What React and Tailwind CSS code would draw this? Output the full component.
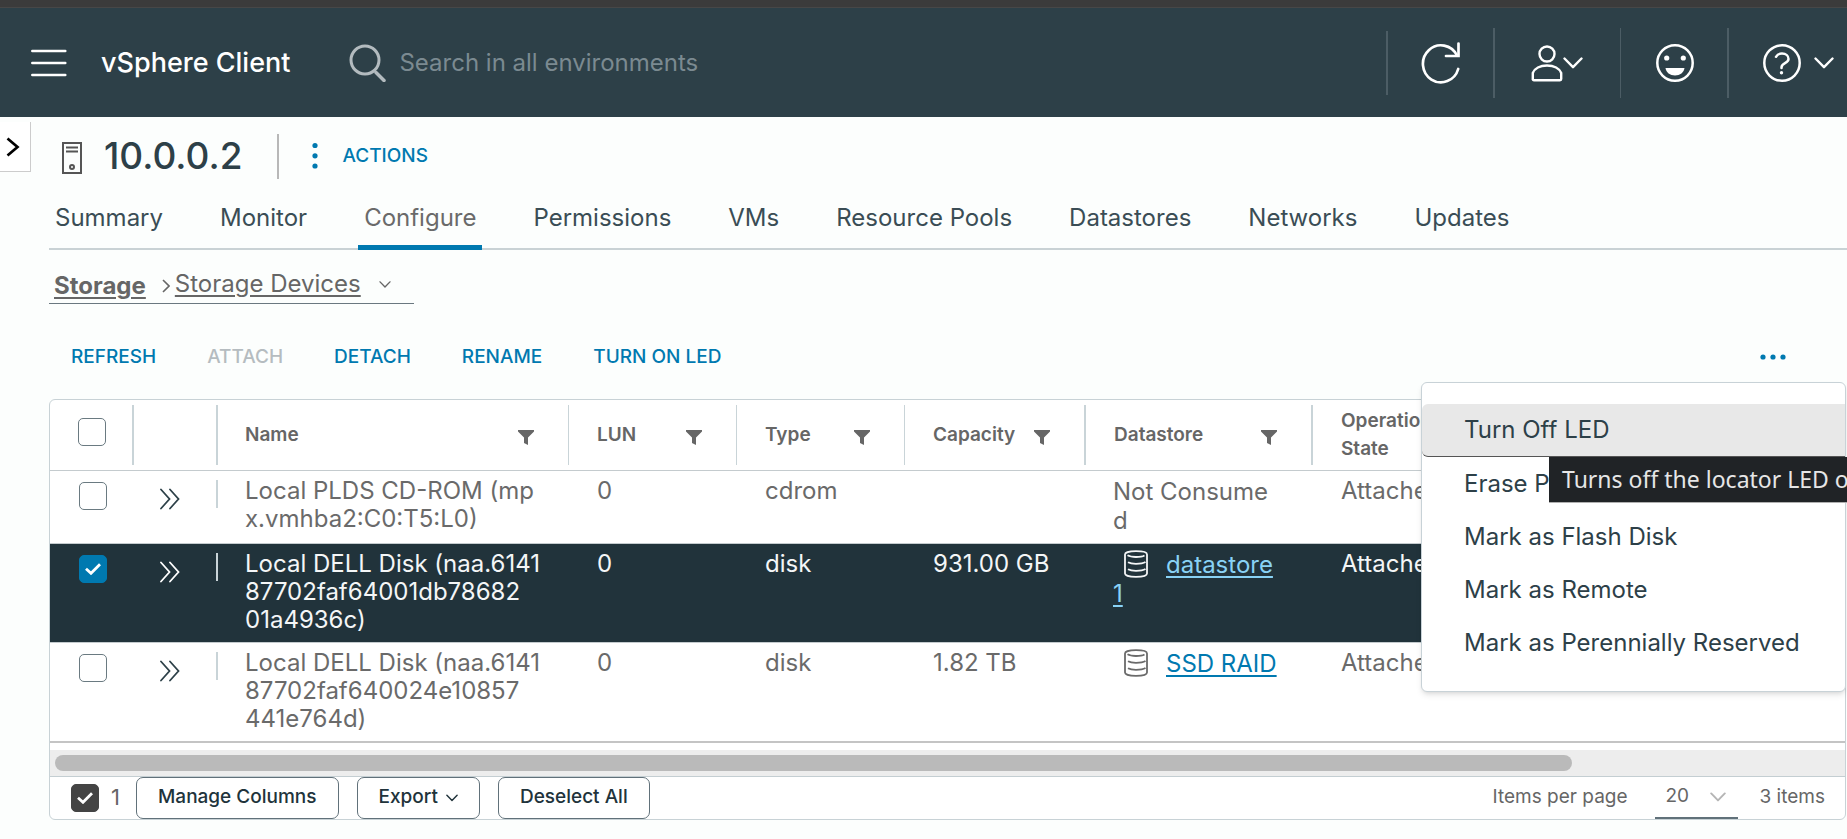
import React from "react";

const tabs = ["Summary", "Monitor", "Configure", "Permissions", "VMs", "Resource Pools", "Datastores", "Networks", "Updates"];

const columns = [
  { name: "Name", divider: "border-r pl-[27px]" },
  { name: "LUN", divider: "border-r pl-7" },
  { name: "Type", divider: "border-r pl-7" },
  { name: "Capacity", divider: "border-r-2 pl-7" },
  { name: "Datastore", divider: "border-r-2 pl-7" },
];

const rows = [
  { name: "Local PLDS CD-ROM (mp\nx.vmhba2:C0:T5:L0)", lun: "0", type: "cdrom", capacity: "", datastore: "Not Consumed", link: false, state: "Attached", selected: false },
  { name: "Local DELL Disk (naa.6141\n87702faf64001db78682\n01a4936c)", lun: "0", type: "disk", capacity: "931.00 GB", datastore: "datastore1", link: true, state: "Attached", selected: true },
  { name: "Local DELL Disk (naa.6141\n87702faf640024e10857\n441e764d)", lun: "0", type: "disk", capacity: "1.82 TB", datastore: "SSD RAID", link: true, state: "Attached", selected: false },
];

const menuItems = ["Turn Off LED", "Erase Partitions", "Mark as Flash Disk", "Mark as Remote", "Mark as Perennially Reserved"];

function Chevron({ className }) {
  return (
    <svg viewBox="0 0 20 12" fill="none" stroke="currentColor" strokeWidth="2.4" strokeLinecap="round" strokeLinejoin="round" className={className} aria-hidden="true">
      <path d="M1.500 1.500 10 10.200l8.500-8.700" />
    </svg>
  );
}

function Funnel() {
  return (
    <svg viewBox="0 0 16 16" className="h-4 w-4 fill-[#666]" aria-hidden="true">
      <path d="M0 1h16v1.500L10 8.500V16l-4-2V8.500L0 2.500z" />
    </svg>
  );
}

function Database() {
  return (
    <svg viewBox="0 0 24 28" fill="none" stroke="currentColor" strokeWidth="1.800" className="inline-block h-7 w-6 align-[-5px]" aria-hidden="true">
      <path d="M1 4.500C1 2.500 5 1.200 12 1.200s11 1.300 11 3.300v19c0 2-4 3.300-11 3.300S1 25.500 1 23.500z" />
      <path d="M3.500 5.300c2 1.200 5 1.700 8.500 1.700s6.500-.4 8.500-1.600M4 12.200c2 1.200 5 1.600 8 1.600s7-.3 9.500-1.800M4 19.200c2 1.200 5 1.600 8 1.600s7-.3 9.500-1.800" />
    </svg>
  );
}

function Checkbox({ label, checked = false, dark = false }) {
  return (
    <span className="inline-grid h-7 w-7 place-items-center align-top">
      <input
        type="checkbox"
        aria-label={label}
        defaultChecked={checked}
        className={
          "peer col-start-1 row-start-1 h-7 w-7 appearance-none rounded-[5px] border border-[#6a7a81] bg-white " +
          (dark ? "checked:border-[#444] checked:bg-[#444]" : "checked:border-[#0079b0] checked:bg-[#0079b0]")
        }
      />
      <svg viewBox="0 0 16 12" fill="none" stroke="#fff" strokeWidth="2.800" className="pointer-events-none col-start-1 row-start-1 hidden h-3 w-4 peer-checked:block" aria-hidden="true">
        <path d="M1 5.800 6 10.300 15 1.200" />
      </svg>
    </span>
  );
}

function Header() {
  return (
    <header>
      <div className="h-2 border-b border-[#474747] bg-[#3b3b3b]" />
      <div className="flex h-[109px] items-center bg-[#2d4048] text-white">
        <button aria-label="Menu" className="ml-[31px]">
          <svg viewBox="0 0 36 28" stroke="#fff" strokeWidth="2.500" strokeLinecap="round" className="h-7 w-9" aria-hidden="true">
            <path d="M1.300 2h33M1.300 14h33M1.300 26h33" />
          </svg>
        </button>
        <h2 className="ml-[34px] text-[27px] font-medium leading-8 whitespace-nowrap">vSphere Client</h2>
        <label className="ml-[59px] flex flex-1 items-center gap-3">
          <svg viewBox="0 0 38 38" fill="none" stroke="#b3bbbf" className="h-[38px] w-[38px] shrink-0" aria-hidden="true">
            <circle cx="16" cy="16" r="14" strokeWidth="3" />
            <path d="M27 28.500l8 8" strokeWidth="3.500" strokeLinecap="round" />
          </svg>
          <input type="search" aria-label="Search" placeholder="Search in all environments" className="w-full min-w-0 bg-transparent text-2xl outline-none placeholder:text-[#7b8a91]" />
        </label>
        <button aria-label="Refresh" className="flex h-16 w-[107px] items-center border-l-2 border-[#4c5d65] pl-[33px]">
          <svg viewBox="0 0 40 42" fill="none" stroke="#fff" strokeWidth="2.700" strokeLinecap="round" className="h-[42px] w-10" aria-hidden="true">
            <path d="M37.200 27A18 18.500 0 1 1 36 13.500" />
            <path d="M25 14h12.500V1.500" />
          </svg>
        </button>
        <button aria-label="User" className="flex h-[70px] w-[127px] items-center border-l-2 border-[#4c5d65] pl-9">
          <svg viewBox="2 0 32 38" fill="none" stroke="#fff" strokeWidth="2.400" className="h-[38px] w-8" aria-hidden="true">
            <circle cx="18" cy="10" r="7.500" />
            <path d="M3.800 36V29C5.500 24.500 11 21.500 18 21.500S30.500 24.500 32.200 29v6c0 .8-.4 1.200-1.200 1.200H5c-.8 0-1.200-.4-1.200-1.200z" />
          </svg>
          <Chevron className="h-3 w-5" />
        </button>
        <button aria-label="Feedback" className="flex h-[70px] w-[107px] items-center border-l border-[#4c5d65] pl-[35px]">
          <svg viewBox="0 0 38 38" fill="none" stroke="#fff" className="h-[38px] w-[38px]" aria-hidden="true">
            <circle cx="19" cy="19" r="17.700" strokeWidth="2.500" />
            <path d="M9.500 24h19c-.5 4.500-4.500 7.500-9.500 7.500S10 28.500 9.500 24z" fill="#fff" stroke="none" />
            <circle cx="10.700" cy="14" r="2.600" fill="#fff" stroke="none" />
            <circle cx="27.300" cy="14" r="2.600" fill="#fff" stroke="none" />
          </svg>
        </button>
        <button aria-label="Help" className="flex h-[70px] w-[120px] items-center gap-[13px] border-l-2 border-[#4c5d65] pl-[34px]">
          <svg viewBox="0 0 38 38" fill="none" stroke="#fff" className="h-[38px] w-[38px]" aria-hidden="true">
            <circle cx="19" cy="19" r="17.700" strokeWidth="2.500" />
            <path d="M13 12.800c1.200-2 3.300-3.200 6-3.200 4 0 6.500 2.200 6.500 5.400 0 4.500-7 3.800-7 8.400v.6" strokeWidth="2.500" strokeLinecap="round" />
            <circle cx="18.500" cy="28.700" r="1.700" fill="#fff" stroke="none" />
          </svg>
          <Chevron className="h-3 w-5" />
        </button>
      </div>
    </header>
  );
}

function ActionMenu() {
  return (
    <div role="menu" className="absolute top-[78px] right-px z-10 w-[425px] rounded-[6px] border border-[#c8d2d7] bg-white pt-[21px] pb-[22px] font-normal shadow-md">
      {menuItems.map((item, i) => (
        <div key={item} className="relative">
          <button
            role="menuitem"
            className={
              "block h-[53px] w-full pl-[42px] text-left text-2xl whitespace-nowrap text-[#2d4048] " +
              (i === 0 ? "rounded-l-[6px] border-b border-[#555] bg-[#e8e8e8]" : "")
            }
          >
            {item}
          </button>
          {i === 0 && (
            <div role="tooltip" className="absolute top-[53px] left-[127px] z-20 h-[46px] border-b border-[#b0b0b0] bg-[#202326] px-[13px] font-['Noto_Sans',sans-serif] text-[23px] leading-[44px] whitespace-nowrap text-[#e6e6e6]">
              Turns off the locator LED of
            </div>
          )}
        </div>
      ))}
    </div>
  );
}

function DeviceTable() {
  return (
    <table className="w-full table-fixed border-collapse text-left">
      <colgroup>
        <col className="w-[84px]" />
        <col className="w-[84px]" />
        <col className="w-[351px]" />
        <col className="w-[168px]" />
        <col className="w-[168px]" />
        <col className="w-[181px]" />
        <col className="w-[227px]" />
        <col />
      </colgroup>
      <thead>
        <tr className="h-[70px] border-b border-[#c4cbce] text-[19px] leading-7 font-semibold text-[#666]">
          <th className="p-0">
            <div className="flex h-[60px] items-center border-r-2 border-[#c9d4d8] pb-[5px] pl-7">
              <Checkbox label="Select all devices" />
            </div>
          </th>
          <th className="p-0" aria-label="Details">
            <div className="h-[60px] border-r-2 border-[#c9d4d8]" />
          </th>
          {columns.map(({ name, divider }) => (
            <th key={name} className="p-0 font-semibold">
              <div className={"flex h-[60px] items-center justify-between border-[#c9d4d8] pr-[34px] " + divider}>
                {name}
                <button aria-label={"Filter " + name} className="mt-1">
                  <Funnel />
                </button>
              </div>
            </th>
          ))}
          <th className="py-0 pr-0 pl-7 font-semibold">
            Operational
            <br />
            State
          </th>
        </tr>
      </thead>
      <tbody>
        {rows.map((row, i) => {
          const last = i === rows.length - 1;
          return (
            <tr
              key={row.name}
              className={
                "align-top text-2xl leading-7 break-all " +
                (row.selected ? "bg-[#21333b] text-[#f4f6f7] " : "text-[#6a6a6a] ") +
                (last ? "border-b-2 border-[#c4c4c4]" : "border-b border-[#c4cbce]")
              }
            >
              <td className="pt-[11px] pl-[29px]">
                <Checkbox label={"Select " + row.name} checked={row.selected} />
              </td>
              <td className="pt-[9px]">
                <div className={"flex h-7 items-center border-r-2 border-[#c9d4d8] pl-[26px] " + (row.selected ? "text-white" : "text-[#2d4048]")}>
                  <button aria-label="Show details" className="mt-[10px]">
                    <svg viewBox="0 0 20 22" fill="none" stroke="currentColor" strokeWidth="1.800" strokeLinecap="round" className="h-[22px] w-5" aria-hidden="true">
                      <path d="M1 1.500 9.500 11 1 20.500M10 1.500l8.500 9.500L10 20.500" />
                    </svg>
                  </button>
                </div>
              </td>
              <td className="pt-[6px] pb-2 pl-[27px] whitespace-pre">{row.name}</td>
              <td className="pt-[6px] pl-7">{row.lun}</td>
              <td className="pt-[6px] pl-7">{row.type}</td>
              <td className="pt-[6px] pl-7 whitespace-nowrap">{row.capacity}</td>
              <td className="pt-[6px] pr-8 pb-2 pl-[27px] leading-[29px]">
                {row.link ? (
                  <>
                    <span className="mr-[18px] ml-[11px] inline-block h-[26px]">
                      <Database />
                    </span>
                    <a href="#datastore" className={"underline decoration-2 underline-offset-[3px] " + (row.selected ? "text-[#89d2f5]" : "text-[#0079b0]")}>
                      {row.datastore}
                    </a>
                  </>
                ) : (
                  row.datastore
                )}
              </td>
              <td className="pt-[6px] pl-7">{row.state}</td>
            </tr>
          );
        })}
      </tbody>
    </table>
  );
}

function Footer() {
  const button = "flex h-[42px] items-center gap-2 rounded-[7px] border border-[#61717a] px-[21px] text-[19px] font-medium text-[#21333b] whitespace-nowrap";
  return (
    <footer className="flex h-[43px] items-center border-t border-[#c4ced2] pl-[21px]">
      <Checkbox label="Selected devices" checked dark />
      <span className="ml-3 w-[25px] text-[22px] text-[#666]">1</span>
      <div className="flex gap-[18px]">
        <button className={button}>Manage Columns</button>
        <button className={button}>
          Export
          <Chevron className="h-2 w-3" />
        </button>
        <button className={button}>Deselect All</button>
      </div>
      <div className="ml-auto flex h-full items-center pr-5 text-[19px] text-[#666]">
        <label htmlFor="page-size">Items per page</label>
        <div className="ml-[27px] grid h-full w-[83px] items-center border-b-2 border-[#61717a]">
          <select id="page-size" defaultValue="20" className="col-start-1 row-start-1 w-full appearance-none bg-transparent pl-[11px]">
            <option>20</option>
          </select>
          <Chevron className="pointer-events-none col-start-1 row-start-1 mr-3 h-[10px] w-4 justify-self-end text-[#b5b5b5]" />
        </div>
        <span className="ml-[22px]">3 items</span>
      </div>
    </footer>
  );
}

export default function App() {
  return (
    <div className="min-h-screen overflow-x-hidden bg-[#fcfefd] font-['Inter',sans-serif] text-[#2d4048]">
      <Header />
      <div className="flex">
        <button aria-label="Expand navigation" className="mt-[5px] mr-[18px] flex h-[50px] w-[31px] shrink-0 items-center border-r border-b border-[#ccc] bg-white pl-[6px]">
          <svg viewBox="0 0 14 20" fill="none" stroke="#000" strokeWidth="2.700" className="h-5 w-[14px]" aria-hidden="true">
            <path d="M1.500 1.500 11.500 10l-10 8.500" />
          </svg>
        </button>
        <main className="min-w-0 flex-1">
          <div className="flex h-[78px] items-center">
            <svg viewBox="0 0 20 32" fill="none" stroke="#555" strokeWidth="2" className="mt-1 ml-[13px] h-8 w-5" aria-hidden="true">
              <path d="M1 1h18v30H1zM4 5.500h12M4 9.500h12" />
              <circle cx="10" cy="25" r="2" />
            </svg>
            <h1 className="ml-[22px] text-[37px] leading-10 font-medium">10.0.0.2</h1>
            <div className="ml-[34px] h-[45px] w-[2px] bg-[#b8b8b8]" />
            <button className="ml-8 flex items-center gap-6 text-[19px] font-medium text-[#0079b0]">
              <svg viewBox="0 0 8 28" fill="currentColor" className="h-7 w-2" aria-hidden="true">
                <circle cx="4" cy="3.500" r="2.600" />
                <circle cx="4" cy="13.800" r="2.600" />
                <circle cx="4" cy="24" r="2.600" />
              </svg>
              ACTIONS
            </button>
          </div>
          <nav className="flex h-[55px] gap-[45px] border-b-2 border-[#c9d2d5]">
            {tabs.map((tab) => (
              <a
                key={tab}
                href={"#" + tab.toLowerCase().replace(" ", "-")}
                className={
                  "flex h-[55px] items-center border-b-[5px] px-[6px] pb-1 text-2xl whitespace-nowrap " +
                  (tab === "Configure" ? "border-[#0079b0] text-[#6a6a6a]" : "border-transparent text-[#3a4d55]")
                }
              >
                {tab}
              </a>
            ))}
          </nav>
          <div className="flex h-[54px] w-[365px] items-center border-b border-[#6a7880] pt-[15px] pl-[5px] text-2xl whitespace-nowrap text-[#666]">
            <a href="#storage" className="pt-1 font-bold underline decoration-2 underline-offset-[3px]">Storage</a>
            <svg viewBox="0 0 8 14" fill="none" stroke="currentColor" strokeWidth="1.600" className="mt-1 mr-[5px] ml-4 h-[14px] w-2" aria-hidden="true">
              <path d="M1 1l6 6-6 6" />
            </svg>
            <button className="flex items-center gap-[18px]">
              <span className="underline decoration-2 underline-offset-[3px]">Storage Devices</span>
              <Chevron className="h-[7px] w-3" />
            </button>
          </div>
          <div className="relative flex h-[95px] items-center gap-[51px] pt-[11px] pr-[60px] pl-[22px] text-[19px] font-medium text-[#0079b0]">
            <button>REFRESH</button>
            <button disabled className="text-[#b5bcc0]">ATTACH</button>
            <button>DETACH</button>
            <button>RENAME</button>
            <button>TURN ON LED</button>
            <button aria-label="More actions" className="ml-auto">
              <svg viewBox="0 0 28 8" fill="currentColor" className="h-2 w-7" aria-hidden="true">
                <circle cx="4" cy="4" r="2.600" />
                <circle cx="14" cy="4" r="2.600" />
                <circle cx="24" cy="4" r="2.600" />
              </svg>
            </button>
            <ActionMenu />
          </div>
          <div className="mr-px overflow-hidden rounded-[6px] border border-[#c8d2d6] bg-white">
            <DeviceTable />
            <div className="mt-[7px] bg-[#ededed] px-[5px] py-[5px]">
              <div className="h-4 w-[85%] rounded-full bg-[#bababa]" />
            </div>
            <Footer />
          </div>
        </main>
      </div>
    </div>
  );
}
